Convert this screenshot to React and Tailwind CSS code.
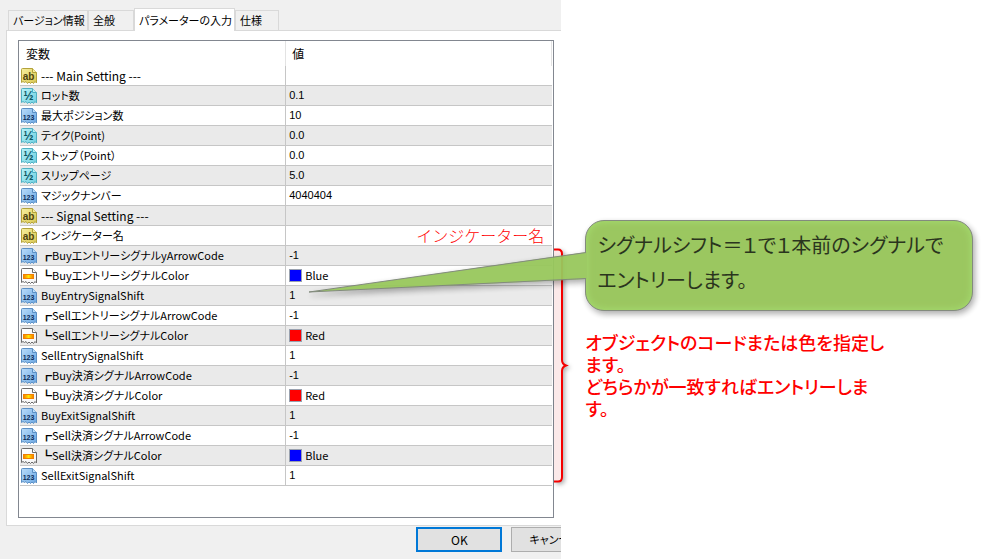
import { useState } from "react";

const tabs = [
    { name: "バージョン情報", width: "w-20" },
    { name: "全般", width: "w-[46px]" },
    { name: "パラメーターの入力", width: "w-[101px]" },
    { name: "仕様", width: "w-11" },
];

const params = [
    { type: "ab", name: "--- Main Setting ---", value: "" },
    { type: "half", name: "ロット数", value: "0.1" },
    { type: "int", name: "最大ポジション数", value: "10" },
    { type: "half", name: "テイク(Point)", value: "0.0" },
    { type: "half", name: "ストップ（Point）", value: "0.0" },
    { type: "half", name: "スリップページ", value: "5.0" },
    { type: "int", name: "マジックナンバー", value: "4040404" },
    { type: "ab", name: "--- Signal Setting ---", value: "" },
    { type: "ab", name: "インジケーター名", note: "インジケーター名" },
    { type: "int", name: "┏BuyエントリーシグナルyArrowCode", value: "-1" },
    { type: "color", name: "┗BuyエントリーシグナルColor", value: "Blue" },
    { type: "int", name: "BuyEntrySignalShift", value: "1" },
    { type: "int", name: "┏SellエントリーシグナルArrowCode", value: "-1" },
    { type: "color", name: "┗SellエントリーシグナルColor", value: "Red" },
    { type: "int", name: "SellEntrySignalShift", value: "1" },
    { type: "int", name: "┏Buy決済シグナルArrowCode", value: "-1" },
    { type: "color", name: "┗Buy決済シグナルColor", value: "Red" },
    { type: "int", name: "BuyExitSignalShift", value: "1" },
    { type: "int", name: "┏Sell決済シグナルArrowCode", value: "-1" },
    { type: "color", name: "┗Sell決済シグナルColor", value: "Blue" },
    { type: "int", name: "SellExitSignalShift", value: "1" },
];

const iconStyles = {
    ab: { from: "#f7efa0", to: "#d9c750", line: "#b3a23c", text: "#4d4310", label: "ab", size: 10 },
    half: { from: "#b5f1f7", to: "#6fcfe0", line: "#4fafc2", text: "#0d5663", label: "½", size: 12 },
    int: { from: "#b9dcfa", to: "#6ba7e2", line: "#5b8fc4", text: "#0c2d57", label: "123", size: 7 },
    color: { from: "#ffffff", to: "#f4f4f4", line: "#6b6b6b" },
};

function TypeIcon({ type }) {
    const s = iconStyles[type];
    return (
        <svg viewBox="0 0 16 16" className="size-4 shrink-0" aria-hidden="true">
            <defs>
                <linearGradient id={"fill-" + type} x1="0" y1="0" x2="1" y2="1">
                    <stop offset="0" stopColor={s.from} />
                    <stop offset="1" stopColor={s.to} />
                </linearGradient>
                <linearGradient id="orange">
                    <stop offset="0" stopColor="#f47a00" />
                    <stop offset="0.5" stopColor="#ffe600" />
                    <stop offset="1" stopColor="#f47a00" />
                </linearGradient>
            </defs>
            <path
                d="M0.5 1.5 Q0.5 0.5 1.5 0.5 H11.5 L15.5 4.5 V15 L14 13.5 L12.5 15.5 L11 14 L9.5 15.5 L8 14 L6.5 15.5 L5 13.5 L3.5 14.5 L2 13.5 L0.5 14.5 Z"
                fill={`url(#fill-${type})`}
                stroke={s.line}
            />
            <path d="M11.5 0.5 V4.5 H15.5" fill={s.from} stroke={s.line} />
            {type === "color" ? (
                <rect x="2.5" y="6.5" width="10" height="4" fill="url(#orange)" stroke="#f08000" />
            ) : (
                <text
                    x="7.5"
                    y="11.5"
                    textAnchor="middle"
                    fontSize={s.size}
                    fontWeight="700"
                    fontFamily="'Liberation Sans', sans-serif"
                    fill={s.text}
                >
                    {s.label}
                </text>
            )}
        </svg>
    );
}

function ParamValue({ param }) {
    if (param.note) {
        return (
            <div className="pr-2 text-right text-base leading-[19px] font-light text-[#ff0000] [font-feature-settings:normal]">
                {param.note}
            </div>
        );
    }
    if (param.type === "color") {
        return (
            <div className="flex items-center gap-[3px] pl-[3px] text-[11px]">
                <span
                    className={
                        "size-[13px] border border-gray-400 " +
                        (param.value === "Blue" ? "bg-[#0000ff]" : "bg-[#ff0000]")
                    }
                />
                {param.value}
            </div>
        );
    }
    return (
        <div className="pl-[3px] font-['Liberation_Sans',sans-serif] text-[11px]">{param.value}</div>
    );
}

function ParamTable() {
    return (
        <table className="w-full table-fixed border-separate border-spacing-0 text-left">
            <thead>
                <tr className="h-[25px]">
                    <th className="w-1/2 border-r border-[#e3e3e3] p-0 pl-1.5 font-normal">変数</th>
                    <th className="w-1/2 border-r border-[#e3e3e3] p-0 pl-1.5 font-normal">値</th>
                </tr>
            </thead>
            <tbody>
                {params.map((p, i) => (
                    <tr key={i} className="h-5 even:bg-[#eaeaea]">
                        <td className="border-r border-b border-[#c6c6c6] p-0">
                            <div
                                className={
                                    "flex h-[19px] items-center gap-1 pl-px whitespace-nowrap " +
                                    (p.name.startsWith("---") ? "text-xs" : "text-[11px]")
                                }
                            >
                                <TypeIcon type={p.type} />
                                {p.name}
                            </div>
                        </td>
                        <td className="border-b border-[#c6c6c6] p-0">
                            <ParamValue param={p} />
                        </td>
                    </tr>
                ))}
            </tbody>
        </table>
    );
}

function Callout() {
    return (
        <div className="relative z-10 mr-[25px] ml-6 opacity-95 drop-shadow-[2px_3px_3px_rgba(0,0,0,0.35)]">
            <p className="rounded-[19px] border border-[#7d8578] bg-[#96c458] px-[11px] pt-1.5 pb-[13px] text-xl leading-[35px] text-[#1e2b12] shadow-[inset_0_0_9px_#a2de6a] [font-feature-settings:'palt']">
                シグナルシフト＝１で１本前のシグナルで
                <br />
                エントリーします。
            </p>
            <svg
                viewBox="0 0 278 42"
                className="absolute top-8 -left-[276px] h-[42px] w-[278px]"
                aria-hidden="true"
            >
                <path d="M278 0 L0 40 L278 27 Z" fill="#98c85c" />
                <path d="M277 0.5 L0 40 L277 26.5" fill="none" stroke="#7d8578" />
            </svg>
        </div>
    );
}

function Bracket() {
    return (
        <svg
            viewBox="0 0 16 236"
            className="absolute top-[248px] -left-2 h-[236px] w-4 drop-shadow-[2px_2px_2px_rgba(0,0,0,0.3)]"
            aria-hidden="true"
        >
            <path
                d="M1 1.5 H5 Q9 1.5 9 6 V112 Q9 116 13 117.5 Q9 119 9 123 V229 Q9 233.5 5 233.5 H1"
                fill="#fbe9e9"
                stroke="#f50000"
                strokeWidth="2"
            />
        </svg>
    );
}

export default function App() {
    const [active, setActive] = useState(2);

    return (
        <div className="flex min-h-screen bg-white font-['Noto_Sans_CJK_JP',sans-serif] text-xs leading-[19px] text-black">
            <main className="w-9/16 overflow-hidden bg-[#f0f0f0] pt-2 pl-1.5">
                <div role="tablist" className="flex items-end pl-0.5 text-[11px]">
                    {tabs.map((t, i) => (
                        <button
                            key={t.name}
                            role="tab"
                            aria-selected={i === active}
                            onClick={() => setActive(i)}
                            className={
                                "shrink-0 border border-b-0 border-[#d9d9d9] pl-1 text-left whitespace-nowrap [font-feature-settings:'palt'] " +
                                t.width +
                                (i === active ? " -mb-px h-[23px] bg-white" : " h-5 bg-[#f0f0f0]")
                            }
                        >
                            {t.name}
                        </button>
                    ))}
                </div>
                <section className="border-y border-l border-[#d9d9d9] bg-white pt-[9px] pr-[7px] pb-[7px] pl-[11px]">
                    <div className="border border-[#828790] px-px pb-[31px] [font-feature-settings:'palt']">
                        <ParamTable />
                    </div>
                </section>
                <div className="-mr-9 flex justify-end gap-[9px] pt-px pb-[7px]">
                    <button className="h-[25px] w-[86px] border-2 border-[#0078d7] bg-[#e1e1e1] leading-5">
                        OK
                    </button>
                    <button className="h-[25px] w-[86px] border border-[#adadad] bg-[#e1e1e1] text-[11px] [font-feature-settings:'palt']">
                        キャンセル
                    </button>
                </div>
            </main>
            <aside className="relative flex-1 pt-[220px]">
                <Bracket />
                <Callout />
                <p className="mt-5 ml-6 text-lg leading-[22px] font-medium text-[#ff0000] [font-feature-settings:'palt']">
                    オブジェクトのコードまたは色を指定し
                    <br />
                    ます。
                    <br />
                    どちらかが一致すればエントリーしま
                    <br />
                    す。
                </p>
            </aside>
        </div>
    );
}
